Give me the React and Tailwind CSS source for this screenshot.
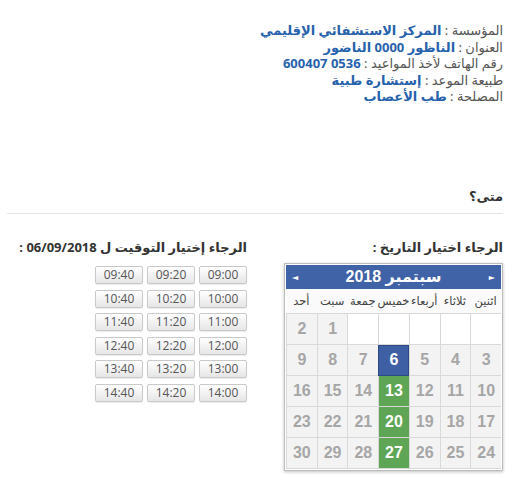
import React from "react";

const days = ["اثنين", "ثلاثاء", "أربعاء", "خميس", "جمعة", "سبت", "أحد"];

// September 2018, week starts on Monday (1 falls on a Saturday)
const weeks = [
    [null, null, null, null, null, 1, 2],
    [3, 4, 5, 6, 7, 8, 9],
    [10, 11, 12, 13, 14, 15, 16],
    [17, 18, 19, 20, 21, 22, 23],
    [24, 25, 26, 27, 28, 29, 30],
];

const selected = 6;
const available = [13, 20, 27];

const times = [
    ["09:00", "09:20", "09:40"],
    ["10:00", "10:20", "10:40"],
    ["11:00", "11:20", "11:40"],
    ["12:00", "12:20", "12:40"],
    ["13:00", "13:20", "13:40"],
    ["14:00", "14:20", "14:40"],
];

const InfoLine = ({ label, value }) => (
    <div>
        <span className="text-[#555]">{label} : </span>
        <span className="font-bold text-[#2762ad]">{value}</span>
    </div>
);

const DayCell = ({ day }) => {
    if (day === null) {
        return <div className="h-[31px] border-l border-b border-[#d9d9d9] bg-white"></div>;
    }
    let cls = "bg-[#f3f3f3] text-[#a6a6a6]";
    if (day === selected) cls = "bg-[#3e5fa4] text-white outline outline-1 -outline-offset-1 outline-[#2d4a86]";
    else if (available.includes(day)) cls = "bg-[#5ea655] text-white";
    return (
        <div className={"h-[31px] border-l border-b border-[#d9d9d9] flex items-center justify-center text-[16px] font-bold " + cls}>
            {day}
        </div>
    );
};

const Calendar = () => (
    <div className="w-[219px] border border-[#bdbdbd] bg-white shadow-[0_1px_3px_rgba(0,0,0,0.25)] p-px">
        <div className="h-[24px] bg-[#4062a7] flex items-center justify-between px-[6px] text-white">
            <span className="text-[8px]">►</span>
            <span className="text-[16px] font-bold" style={{ fontFamily: '"Liberation Sans", "DejaVu Sans", sans-serif' }}>سبتمبر 2018</span>
            <span className="text-[8px]">◄</span>
        </div>
        <div className="grid grid-cols-7 h-[25px] border-b border-[#d9d9d9] bg-[#fafafa]">
            {days.map((d) => (
                <div key={d} className="flex items-center justify-center text-[11.5px] text-[#444] whitespace-nowrap">
                    {d}
                </div>
            ))}
        </div>
        <div className="grid grid-cols-7" style={{ fontFamily: '"Liberation Sans", Arial, sans-serif' }}>
            {weeks.map((w, i) =>
                w.map((day, j) => <DayCell key={i + "-" + j} day={day} />)
            )}
        </div>
    </div>
);

export default function App() {
    return (
        <div
            dir="rtl"
            className="w-[518px] h-[502px] bg-white pt-[22px] pr-[15px] pl-[7px] text-[13px] text-[#333]"
            style={{ fontFamily: '"Noto Sans", "DejaVu Sans", sans-serif' }}
        >
            <div className="leading-[16.5px]">
                <InfoLine label="المؤسسة" value="المركز الاستشفائي الإقليمي" />
                <InfoLine label="العنوان" value="الناظور 0000 الناضور" />
                <InfoLine label="رقم الهاتف لأخذ المواعيد" value="0536 600407" />
                <InfoLine label="طبيعة الموعد" value="إستشارة طبية" />
                <InfoLine label="المصلحة" value="طب الأعصاب" />
            </div>

            <div className="mt-[82px] pb-[7px] border-b border-[#e5e5e5] font-bold text-[13px] text-[#333]">
                متى؟
            </div>

            <div className="grid grid-cols-[244px_240px] gap-x-[12px] mt-[24px]">
                <div>
                    <div className="font-bold text-[13px] text-[#333] h-[18px] leading-[18px]">الرجاء اختيار التاريخ :</div>
                    <div className="mt-[7px]">
                        <Calendar />
                    </div>
                </div>
                <div>
                    <div className="font-bold text-[13px] text-[#333] h-[18px] leading-[18px]">الرجاء إختيار التوقيت ل 06/09/2018 :</div>
                    <div className="mt-[10px] grid grid-cols-[48px_48px_48px] gap-x-[4px] gap-y-[5.5px]">
                        {times.flat().map((t) => (
                            <button
                                key={t}
                                className="h-[18px] rounded-[2px] border border-[#c9c9c9] bg-gradient-to-b from-white to-[#e6e6e6] text-[12px] leading-[16px] text-[#555] shadow-[0_1px_1px_rgba(0,0,0,0.08)]"
                                style={{ fontFamily: '"Open Sans", sans-serif' }}
                            >
                                {t}
                            </button>
                        ))}
                    </div>
                </div>
            </div>
        </div>
    );
}
